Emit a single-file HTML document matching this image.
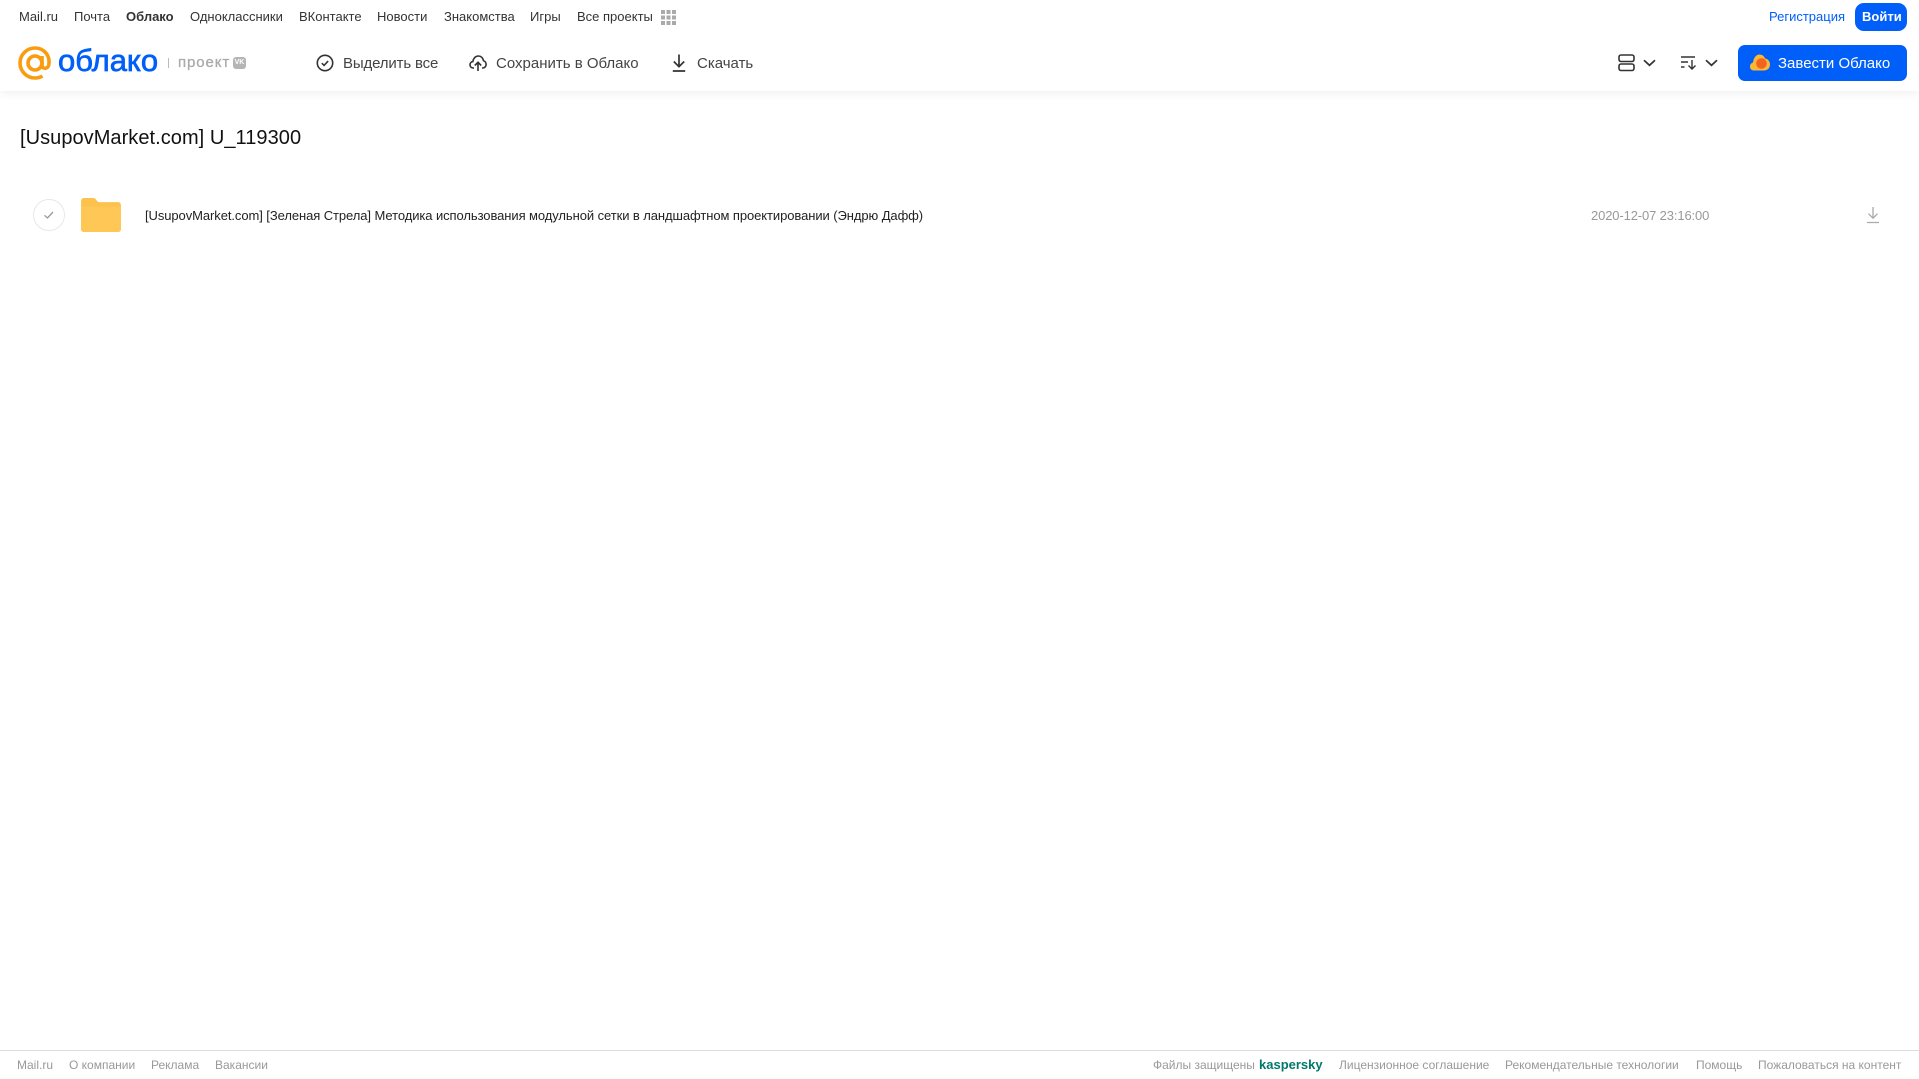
<!DOCTYPE html>
<html lang="ru"><head><meta charset="utf-8"><title>Облако</title>
<style>
html,body{margin:0;padding:0;background:#fff}
body{width:1919px;height:1079px;position:relative;overflow:hidden;font-family:"Liberation Sans",Arial,sans-serif}
.t{position:absolute;white-space:nowrap;line-height:20px}
.n{top:7px;font-size:13px;color:#333}
.m{top:54px;font-size:15px;color:#444}
.f{top:1055px;font-size:12px;color:#999}
svg{position:absolute;display:block}
</style></head><body>
<div style="position:absolute;left:0;top:0;width:1919px;height:91px;background:#fff;box-shadow:0 1px 10px rgba(0,0,0,.08)"></div>

<div class="t n" style="left:19px">Mail.ru</div>
<div class="t n" style="left:74px">Почта</div>
<div class="t n" style="left:126px;font-weight:bold">Облако</div>
<div class="t n" style="left:190px">Одноклассники</div>
<div class="t n" style="left:299px">ВКонтакте</div>
<div class="t n" style="left:377px">Новости</div>
<div class="t n" style="left:444px">Знакомства</div>
<div class="t n" style="left:530px">Игры</div>
<div class="t n" style="left:577px">Все проекты</div>
<svg style="left:661px;top:10px" width="15" height="15" fill="#aaa"><rect x="0" y="0" width="4" height="4"/><rect x="5.500" y="0" width="4" height="4"/><rect x="11" y="0" width="4" height="4"/><rect x="0" y="5.500" width="4" height="4"/><rect x="5.500" y="5.500" width="4" height="4"/><rect x="11" y="5.500" width="4" height="4"/><rect x="0" y="11" width="4" height="4"/><rect x="5.500" y="11" width="4" height="4"/><rect x="11" y="11" width="4" height="4"/></svg>

<div class="t n" style="left:1769px;color:#005ff9">Регистрация</div>
<div style="position:absolute;left:1855px;top:3px;width:52px;height:28px;border-radius:9px;background:#005ff9"></div>
<div class="t n" style="left:1862px;color:#fff;font-weight:bold">Войти</div>

<svg style="left:18px;top:46px" width="34" height="34" viewBox="0 0 34 34" fill="none" stroke="#fa9c0f" stroke-width="3.600"><circle cx="17" cy="17" r="7"/><path d="M24 10v9.500c0 3.500 5.700 4 6.800-.5C32.500 9.500 26 2 17 2 8.500 2 2 9 2 17s6.500 15 15 15c3 0 5.500-.8 7.500-2"/></svg>
<div class="t" style="left:58px;top:43px;font-size:31px;line-height:36px;color:#005ff9;-webkit-text-stroke:.7px #005ff9">облако</div>
<div style="position:absolute;left:168px;top:58px;width:1px;height:10px;background:#bbb"></div>
<div class="t" style="left:178px;top:53px;font-size:15px;color:#aaa;letter-spacing:.9px;-webkit-text-stroke:.3px #aaa">проект</div>
<div style="position:absolute;left:233px;top:57px;width:13px;height:12px;border-radius:3px;background:#b5b5b5"></div>
<div class="t" style="left:233px;top:57px;width:13px;text-align:center;line-height:12px;font-size:7px;font-weight:bold;color:#fff">VK</div>

<svg style="left:316px;top:54px" width="18" height="18" viewBox="0 0 18 18" fill="none" stroke="#333" stroke-width="1.600"><circle cx="9" cy="9" r="7.700"/><path d="M5.800 9.200l2.300 2.200 4-4.300"/></svg>
<div class="t m" style="left:343px;letter-spacing:-.15px">Выделить все</div>
<svg style="left:469px;top:54px" width="18" height="18" viewBox="0 0 18 18" fill="none" stroke="#333" stroke-width="1.600"><path d="M5 14H4.300C2.300 14 1 12.500 1 10.800c0-1.700 1.200-3 2.800-3.200C4.300 4.300 6.500 2 9.300 2c2.700 0 4.800 2 5.200 4.700 1.500.4 2.600 2 2.600 3.800 0 2-1.500 3.500-3.500 3.500H13"/><path d="M9 17V8.500M5.800 11.500L9 8.300l3.200 3.200"/></svg>
<div class="t m" style="left:496px">Сохранить в Облако</div>
<svg style="left:671px;top:54px" width="16" height="18" viewBox="0 0 16 18" fill="none" stroke="#333" stroke-width="1.700"><path d="M8 0.500V12.500M2.800 7.500L8 12.700l5.200-5.200M1.800 17h12.400"/></svg>
<div class="t m" style="left:697px">Скачать</div>

<svg style="left:1618px;top:54px" width="17" height="18" viewBox="0 0 17 18" fill="none" stroke="#333" stroke-width="1.600"><rect x="1" y="1" width="15" height="6.500" rx="2"/><rect x="1" y="10" width="15" height="6.500" rx="2"/></svg>
<svg style="left:1643px;top:59px" width="13" height="8" viewBox="0 0 13 8" fill="none" stroke="#333" stroke-width="1.700"><path d="M1 1.300l5.500 5 5.500-5"/></svg>
<svg style="left:1681px;top:55px" width="16" height="15" viewBox="0 0 16 15" fill="none" stroke="#333" stroke-width="1.400"><path d="M0 2h14M0 7h7M0 12h3.500M11 5v9M7.500 10.500L11 14l3.500-3.500"/></svg>
<svg style="left:1705px;top:59px" width="13" height="8" viewBox="0 0 13 8" fill="none" stroke="#333" stroke-width="1.700"><path d="M1 1.300l5.500 5 5.500-5"/></svg>

<div style="position:absolute;left:1738px;top:45px;width:169px;height:36px;border-radius:7px;background:#005ff9"></div>
<svg style="left:1750px;top:54px" width="20" height="17" viewBox="0 0 20 17"><path d="M4 16.500C1.700 16.500 0 15 0 12.500c0-2 1.300-3.500 3-4C3.500 4 6 .5 9.500.5c2.700 0 4.700 1.800 5.500 4 2.800.3 5 2.800 5 6 0 3.500-2.500 6-6 6z" fill="#fdb736"/><circle cx="11.500" cy="9.500" r="5.300" fill="#f4641e"/></svg>
<div class="t m" style="left:1778px;color:#fff">Завести Облако</div>

<div class="t" style="left:20px;top:125px;font-size:20px;line-height:26px;color:#111;letter-spacing:.05px">[UsupovMarket.com] U_119300</div>

<div style="position:absolute;left:33px;top:199px;width:30px;height:30px;border:1px solid #e8e8e8;border-radius:50%"></div>
<svg style="left:43px;top:210px" width="12" height="10" viewBox="0 0 12 10" fill="none" stroke="#999" stroke-width="1.300"><path d="M1.500 5.300l3 2.700 5.500-6"/></svg>
<svg style="left:81px;top:198px" width="40" height="34" viewBox="0 0 41 35"><path d="M0 3C0 1.300 1.300 0 3 0h9c2.500 0 3 1 4 2.500 1 1.500 1.800 1.800 3.500 1.800H38c1.700 0 3 1.300 3 3V32c0 1.700-1.300 3-3 3H3c-1.700 0-3-1.300-3-3z" fill="#fdc24e"/><path d="M0 9h41v23c0 1.700-1.300 3-3 3H3c-1.700 0-3-1.300-3-3z" fill="#ffc755"/></svg>
<div class="t" style="left:145px;top:206px;font-size:13px;color:#222;letter-spacing:-.08px">[UsupovMarket.com] [Зеленая Стрела] Методика использования модульной сетки в ландшафтном проектировании (Эндрю Дафф)</div>
<div class="t" style="left:1591px;top:206px;font-size:13px;color:#999;letter-spacing:-.13px">2020-12-07 23:16:00</div>
<svg style="left:1866px;top:206px" width="14" height="18" viewBox="0 0 14 18" fill="none" stroke="#aaa" stroke-width="1.300"><path d="M7 1v11M2.500 7.700L7 12.200l4.500-4.500M1 16.500h12"/></svg>

<div style="position:absolute;left:0;top:1050px;width:1919px;height:1px;background:#ddd"></div>
<div class="t f" style="left:17px">Mail.ru</div>
<div class="t f" style="left:69px">О компании</div>
<div class="t f" style="left:151px">Реклама</div>
<div class="t f" style="left:215px">Вакансии</div>
<div class="t f" style="left:1153px">Файлы защищены</div>
<div class="t f" style="left:1259px;color:#00796b;font-weight:bold;font-size:13px">kaspersky</div>
<div class="t f" style="left:1339px">Лицензионное соглашение</div>
<div class="t f" style="left:1505px">Рекомендательные технологии</div>
<div class="t f" style="left:1696px">Помощь</div>
<div class="t f" style="left:1758px">Пожаловаться на контент</div>
</body></html>
